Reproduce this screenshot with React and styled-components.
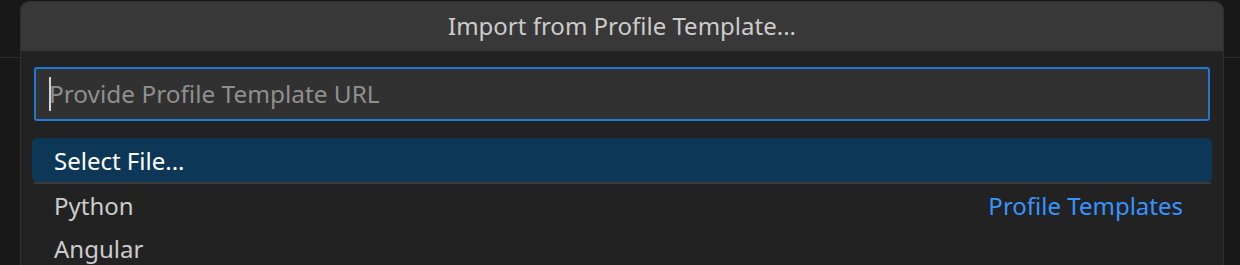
import React from 'react'
import styled, { createGlobalStyle } from 'styled-components'

const Global = createGlobalStyle`
  html, body {
    margin: 0;
    background: #181818;
    overflow: hidden;
  }
  body {
    font-family: "Noto Sans", "Open Sans", sans-serif;
  }
`

const Page = styled.div`
  height: 265px;
  background: linear-gradient(to bottom, #181818 0 57px, #2b2b2b 57px 58px, #181818 58px);
  padding-top: 1px;
  box-sizing: border-box;
`

const Dialog = styled.div`
  margin-left: 20px;
  width: 1204px;
  height: 264px;
  box-sizing: border-box;
  background: #222222;
  border: 1px solid #2f2f2f;
  border-bottom: none;
  border-radius: 9px 9px 0 0;
  overflow: hidden;
  display: flex;
  flex-direction: column;
`

const TitleBar = styled.div`
  height: 49px;
  flex-shrink: 0;
  background: #383838;
  color: #cccccc;
  font-size: 24px;
  display: flex;
  align-items: center;
  justify-content: center;
  padding-bottom: 2px;
  box-sizing: border-box;
`

const Body = styled.div`
  padding: 16px 11px 0;
  display: flex;
  flex-direction: column;
`

const InputBox = styled.div`
  margin: 0 2px;
  height: 54px;
  box-sizing: border-box;
  border: 2px solid #1f78d1;
  border-radius: 3px;
  background: #313131;
  display: flex;
  align-items: center;
  padding-left: 13px;
`

const Caret = styled.span`
  width: 2px;
  height: 34px;
  background: #d4d4d4;
  flex-shrink: 0;
`

const Placeholder = styled.span`
  color: #8f8f8f;
  font-size: 24.4px;
  margin-left: -2px;
  margin-top: -1px;
`

const List = styled.div`
  margin-top: 17px;
  display: flex;
  flex-direction: column;
`

const Row = styled.div`
  height: ${p => (p.$selected ? 44 : 43)}px;
  display: flex;
  align-items: center;
  justify-content: space-between;
  padding: 0 29px 0 22px;
  border-radius: ${p => (p.$selected ? '5px' : '0')};
  background: ${p => (p.$selected ? '#0c3756' : 'transparent')};
  color: ${p => (p.$selected ? '#ffffff' : '#cccccc')};
  font-size: 24px;
`

const Separator = styled.div`
  height: 2px;
  margin: 0 1px 0 2px;
  background: #3a3a3a;
`

const Group = styled.span`
  color: #3794ff;
`

export default function App() {
  return (
    <>
      <Global />
      <Page>
        <Dialog>
          <TitleBar>Import from Profile Template...</TitleBar>
          <Body>
            <InputBox>
              <Caret />
              <Placeholder>Provide Profile Template URL</Placeholder>
            </InputBox>
            <List>
              <Row $selected>Select File...</Row>
              <Separator />
              <Row>
                <span>Python</span>
                <Group>Profile Templates</Group>
              </Row>
              <Row>Angular</Row>
            </List>
          </Body>
        </Dialog>
      </Page>
    </>
  )
}
